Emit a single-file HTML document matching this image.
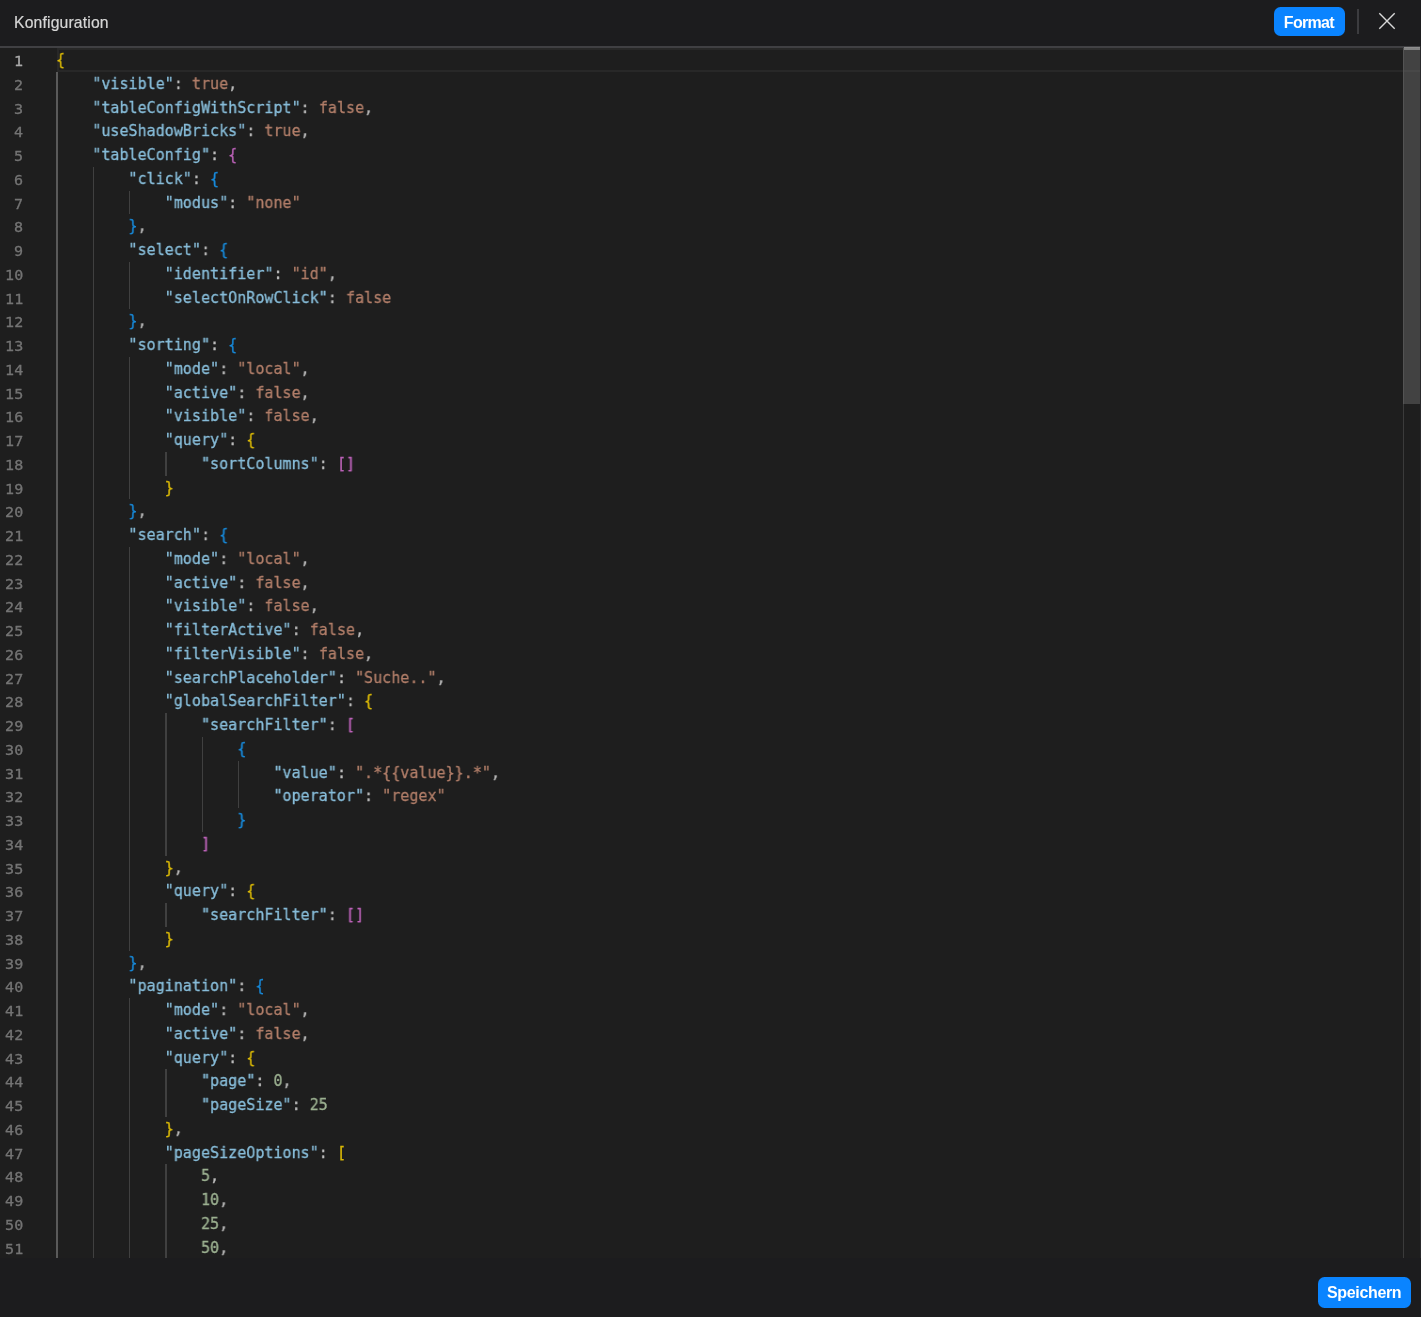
<!DOCTYPE html>
<html lang="de"><head><meta charset="utf-8"><title>Konfiguration</title>
<style>
html,body{margin:0;padding:0;}
body{width:1421px;height:1317px;overflow:hidden;background:#1c1c1e;position:relative;font-family:"Liberation Sans",sans-serif;}
.hdr{position:absolute;left:0;top:0;width:1421px;height:46px;background:#1c1c1e;border-bottom:2px solid #404043;}
.title{will-change:transform;position:absolute;left:13.5px;top:12.75px;font-size:15.75px;line-height:20px;color:#d6d6d6;letter-spacing:0.15px;white-space:nowrap;-webkit-text-stroke:0.2px;}
.btn{will-change:transform;position:absolute;background:#0a84ff;color:#fff;font-weight:bold;font-size:16px;box-sizing:border-box;border-radius:6.5px;text-align:center;white-space:nowrap;}
.fmt{left:1274px;top:7.25px;width:71.25px;height:29px;line-height:31px;letter-spacing:-0.7px;padding-right:1.5px;}
.sav{left:1318px;top:1277px;width:93.3px;height:31px;line-height:31px;letter-spacing:-0.35px;padding-right:1px;}
.div{position:absolute;left:1357px;top:9px;width:2px;height:24.5px;background:#3c3c3f;}
.x{position:absolute;left:1376.5px;top:11.4px;width:20px;height:20px;}
.ed{position:absolute;left:0;top:48.0px;width:1420px;height:1210.25px;background:#1e1e1e;}
.nums{opacity:0.84;will-change:transform;position:absolute;left:0;top:49.5px;width:40px;transform:scaleX(1.07490);transform-origin:0 0;}
.ln{height:23.75px;line-height:23.75px;font-family:"DejaVu Sans Mono",monospace;-webkit-text-stroke:0.3px;font-size:14.0px;color:#858585;text-align:right;white-space:pre;}
.ln.a{color:#c6c6c6;}
.code{opacity:0.84;will-change:transform;position:absolute;left:56.3px;top:47.5px;width:1500px;transform:scaleX(0.94054);transform-origin:0 0;}
.l{height:23.75px;line-height:23.75px;font-family:"DejaVu Sans Mono",monospace;-webkit-text-stroke:0.3px;font-size:16.0px;color:#d4d4d4;white-space:pre;}
.k{color:#9cdcfe;} .s{color:#ce9178;} .n{color:#b5cea8;} .d{color:#dcdcdc;}
.b1{color:#ffd700;} .b2{color:#da70d6;} .b3{color:#179fff;}
.g{position:absolute;width:1.25px;background:#404040;}
.ga{background:#5a5a5a;width:2px;margin-left:-0.4px;}
.cur{position:absolute;left:56.6px;top:48.0px;width:1373.4px;height:23.75px;box-sizing:border-box;border:2.4px solid #282828;}
.ovb{position:absolute;left:1402.75px;top:48.0px;width:1.25px;height:1210.25px;background:#3b3b3b;}
.sl{position:absolute;left:1403px;top:47.5px;width:17px;height:356.25px;background:rgba(121,121,121,0.4);}
.re{position:absolute;left:1420px;top:46px;width:1px;height:1212.25px;background:#29292b;}
.om{position:absolute;left:1404px;top:47.25px;width:16px;height:2.6px;background:rgba(160,160,160,0.8);}
</style></head><body>
<div class="hdr"></div>
<div class="title">Konfiguration</div>
<div class="btn fmt">Format</div>
<div class="div"></div>
<svg class="x" viewBox="0 0 20 20"><path d="M2.3 2.3 L17.7 17.7 M17.7 2.3 L2.3 17.7" stroke="#d8d8d8" stroke-width="1.4" fill="none"/></svg>
<div class="ed"></div>
<div class="cur"></div>
<div class="g ga" style="left:56.70px;top:71.75px;height:1186.50px"></div>
<div class="g" style="left:92.94px;top:166.75px;height:1091.50px"></div>
<div class="g" style="left:129.18px;top:190.50px;height:23.75px"></div>
<div class="g" style="left:129.18px;top:261.75px;height:47.50px"></div>
<div class="g" style="left:129.18px;top:356.75px;height:142.50px"></div>
<div class="g" style="left:129.18px;top:546.75px;height:403.75px"></div>
<div class="g" style="left:129.18px;top:998.00px;height:260.25px"></div>
<div class="g" style="left:165.42px;top:451.75px;height:23.75px"></div>
<div class="g" style="left:165.42px;top:713.00px;height:142.50px"></div>
<div class="g" style="left:165.42px;top:903.00px;height:23.75px"></div>
<div class="g" style="left:165.42px;top:1069.25px;height:47.50px"></div>
<div class="g" style="left:165.42px;top:1164.25px;height:94.00px"></div>
<div class="g" style="left:201.66px;top:736.75px;height:95.00px"></div>
<div class="g" style="left:237.90px;top:760.50px;height:47.50px"></div>

<div class="nums" style="width:21.58px">
<div class="ln a">1</div>
<div class="ln">2</div>
<div class="ln">3</div>
<div class="ln">4</div>
<div class="ln">5</div>
<div class="ln">6</div>
<div class="ln">7</div>
<div class="ln">8</div>
<div class="ln">9</div>
<div class="ln">10</div>
<div class="ln">11</div>
<div class="ln">12</div>
<div class="ln">13</div>
<div class="ln">14</div>
<div class="ln">15</div>
<div class="ln">16</div>
<div class="ln">17</div>
<div class="ln">18</div>
<div class="ln">19</div>
<div class="ln">20</div>
<div class="ln">21</div>
<div class="ln">22</div>
<div class="ln">23</div>
<div class="ln">24</div>
<div class="ln">25</div>
<div class="ln">26</div>
<div class="ln">27</div>
<div class="ln">28</div>
<div class="ln">29</div>
<div class="ln">30</div>
<div class="ln">31</div>
<div class="ln">32</div>
<div class="ln">33</div>
<div class="ln">34</div>
<div class="ln">35</div>
<div class="ln">36</div>
<div class="ln">37</div>
<div class="ln">38</div>
<div class="ln">39</div>
<div class="ln">40</div>
<div class="ln">41</div>
<div class="ln">42</div>
<div class="ln">43</div>
<div class="ln">44</div>
<div class="ln">45</div>
<div class="ln">46</div>
<div class="ln">47</div>
<div class="ln">48</div>
<div class="ln">49</div>
<div class="ln">50</div>
<div class="ln">51</div>
</div>
<div class="code">
<div class="l"><span class="b1">{</span></div>
<div class="l">    <span class="k">"visible"</span><span class="d">:</span> <span class="s">true</span><span class="d">,</span></div>
<div class="l">    <span class="k">"tableConfigWithScript"</span><span class="d">:</span> <span class="s">false</span><span class="d">,</span></div>
<div class="l">    <span class="k">"useShadowBricks"</span><span class="d">:</span> <span class="s">true</span><span class="d">,</span></div>
<div class="l">    <span class="k">"tableConfig"</span><span class="d">:</span> <span class="b2">{</span></div>
<div class="l">        <span class="k">"click"</span><span class="d">:</span> <span class="b3">{</span></div>
<div class="l">            <span class="k">"modus"</span><span class="d">:</span> <span class="s">"none"</span></div>
<div class="l">        <span class="b3">}</span><span class="d">,</span></div>
<div class="l">        <span class="k">"select"</span><span class="d">:</span> <span class="b3">{</span></div>
<div class="l">            <span class="k">"identifier"</span><span class="d">:</span> <span class="s">"id"</span><span class="d">,</span></div>
<div class="l">            <span class="k">"selectOnRowClick"</span><span class="d">:</span> <span class="s">false</span></div>
<div class="l">        <span class="b3">}</span><span class="d">,</span></div>
<div class="l">        <span class="k">"sorting"</span><span class="d">:</span> <span class="b3">{</span></div>
<div class="l">            <span class="k">"mode"</span><span class="d">:</span> <span class="s">"local"</span><span class="d">,</span></div>
<div class="l">            <span class="k">"active"</span><span class="d">:</span> <span class="s">false</span><span class="d">,</span></div>
<div class="l">            <span class="k">"visible"</span><span class="d">:</span> <span class="s">false</span><span class="d">,</span></div>
<div class="l">            <span class="k">"query"</span><span class="d">:</span> <span class="b1">{</span></div>
<div class="l">                <span class="k">"sortColumns"</span><span class="d">:</span> <span class="b2">[</span><span class="b2">]</span></div>
<div class="l">            <span class="b1">}</span></div>
<div class="l">        <span class="b3">}</span><span class="d">,</span></div>
<div class="l">        <span class="k">"search"</span><span class="d">:</span> <span class="b3">{</span></div>
<div class="l">            <span class="k">"mode"</span><span class="d">:</span> <span class="s">"local"</span><span class="d">,</span></div>
<div class="l">            <span class="k">"active"</span><span class="d">:</span> <span class="s">false</span><span class="d">,</span></div>
<div class="l">            <span class="k">"visible"</span><span class="d">:</span> <span class="s">false</span><span class="d">,</span></div>
<div class="l">            <span class="k">"filterActive"</span><span class="d">:</span> <span class="s">false</span><span class="d">,</span></div>
<div class="l">            <span class="k">"filterVisible"</span><span class="d">:</span> <span class="s">false</span><span class="d">,</span></div>
<div class="l">            <span class="k">"searchPlaceholder"</span><span class="d">:</span> <span class="s">"Suche.."</span><span class="d">,</span></div>
<div class="l">            <span class="k">"globalSearchFilter"</span><span class="d">:</span> <span class="b1">{</span></div>
<div class="l">                <span class="k">"searchFilter"</span><span class="d">:</span> <span class="b2">[</span></div>
<div class="l">                    <span class="b3">{</span></div>
<div class="l">                        <span class="k">"value"</span><span class="d">:</span> <span class="s">".*{{value}}.*"</span><span class="d">,</span></div>
<div class="l">                        <span class="k">"operator"</span><span class="d">:</span> <span class="s">"regex"</span></div>
<div class="l">                    <span class="b3">}</span></div>
<div class="l">                <span class="b2">]</span></div>
<div class="l">            <span class="b1">}</span><span class="d">,</span></div>
<div class="l">            <span class="k">"query"</span><span class="d">:</span> <span class="b1">{</span></div>
<div class="l">                <span class="k">"searchFilter"</span><span class="d">:</span> <span class="b2">[</span><span class="b2">]</span></div>
<div class="l">            <span class="b1">}</span></div>
<div class="l">        <span class="b3">}</span><span class="d">,</span></div>
<div class="l">        <span class="k">"pagination"</span><span class="d">:</span> <span class="b3">{</span></div>
<div class="l">            <span class="k">"mode"</span><span class="d">:</span> <span class="s">"local"</span><span class="d">,</span></div>
<div class="l">            <span class="k">"active"</span><span class="d">:</span> <span class="s">false</span><span class="d">,</span></div>
<div class="l">            <span class="k">"query"</span><span class="d">:</span> <span class="b1">{</span></div>
<div class="l">                <span class="k">"page"</span><span class="d">:</span> <span class="n">0</span><span class="d">,</span></div>
<div class="l">                <span class="k">"pageSize"</span><span class="d">:</span> <span class="n">25</span></div>
<div class="l">            <span class="b1">}</span><span class="d">,</span></div>
<div class="l">            <span class="k">"pageSizeOptions"</span><span class="d">:</span> <span class="b1">[</span></div>
<div class="l">                <span class="n">5</span><span class="d">,</span></div>
<div class="l">                <span class="n">10</span><span class="d">,</span></div>
<div class="l">                <span class="n">25</span><span class="d">,</span></div>
<div class="l">                <span class="n">50</span><span class="d">,</span></div>
</div>
<div class="ovb"></div>
<div class="om"></div>
<div class="sl"></div>
<div class="re"></div>
<div class="btn sav">Speichern</div>
</body></html>
